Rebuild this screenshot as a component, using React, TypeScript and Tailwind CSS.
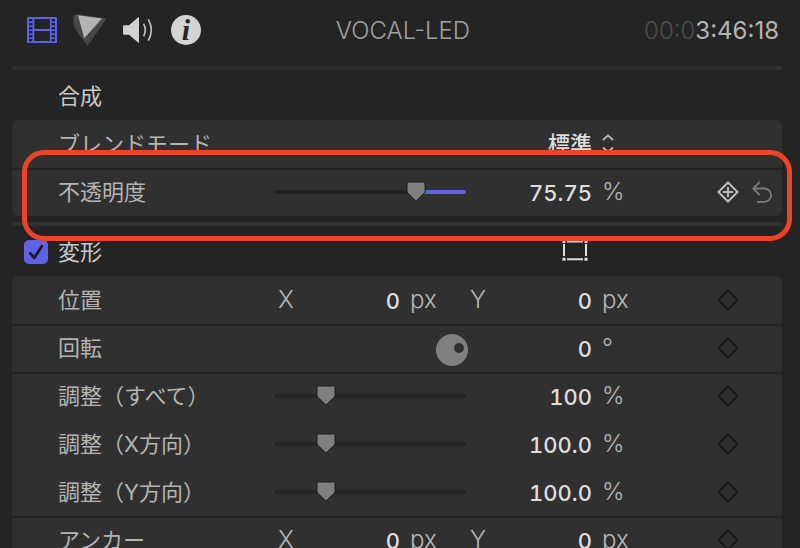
import { useState } from "react";
import type { ReactNode } from "react";

const filmHoles = [2, 6, 10, 14, 18, 22];

function FilmIcon() {
  return (
    <svg width="30" height="26" viewBox="0 0 30 26">
      <rect width="30" height="26" rx="0.5" fill="#5d62e6" />
      <g fill="#242424">
        <rect x="7.3" y="2" width="15.6" height="10" />
        <rect x="7.3" y="14" width="15.6" height="10" />
        {filmHoles.map((y) => (
          <g key={y}>
            <rect x="2" y={y} width="3.4" height="2.4" />
            <rect x="24.6" y={y} width="3.4" height="2.4" />
          </g>
        ))}
      </g>
    </svg>
  );
}

function ColorIcon() {
  return (
    <svg width="34" height="34" viewBox="0 0 34 34">
      <path d="M.3 5Q.5 1.2 4.5 1.2L33.6 5.5 14.7 32.7Q7 24 2 15 .1 10 .3 5Z" fill="#474747" />
      <path d="M5 2.3 29 5.5 11.2 25.3Z" fill="#b4b4b4" />
    </svg>
  );
}

function SpeakerIcon() {
  return (
    <svg width="32" height="30" viewBox="0 0 32 30" fill="none">
      <path d="M1.2 10.3H6L15 2.4Q16 1.8 16 3V27Q16 28.2 15 27.6L6 19.7H1.2Q0 19.7 0 18.5V11.5Q0 10.3 1.2 10.3Z" fill="#d2d2d2" />
      <path d="M20.6 8.6Q24 15 20.6 21.4M25.3 4.4Q31.3 15 25.3 25.6" stroke="#bdbdbd" strokeWidth="1.7" />
    </svg>
  );
}

function InfoIcon() {
  return (
    <svg width="30" height="30" viewBox="0 0 30 30" className="overflow-visible">
      <circle cx="15" cy="15" r="15" fill="#d4d4d4" />
      <text x="15" y="25" textAnchor="middle" className="fill-[#242424] font-['Liberation_Serif',serif] text-[30px] font-bold italic">
        i
      </text>
    </svg>
  );
}

function Slider({ label, initial, filled = false }: { label: string; initial: number; filled?: boolean }) {
  const [position, setPosition] = useState(initial);

  return (
    <div className="relative flex h-6 w-full items-center">
      <div className="flex h-1 w-full justify-end overflow-hidden rounded-full bg-[#242424]">
        {filled && <div className="bg-[#5d62e6]" style={{ width: `${100 - position}%` }} />}
      </div>
      <svg
        width="22"
        height="22"
        viewBox="0 0 22 22"
        className="absolute top-0 -translate-x-1/2"
        style={{ left: `${position}%` }}
      >
        <path
          d="M3.5 2H18.5Q20 2 20 3.5V11.5Q20 12.3 19.4 13L12 20.2Q11 21 10 20.2L2.6 13Q2 12.3 2 11.5V3.5Q2 2 3.5 2Z"
          fill="#808080"
          stroke="#1c1c1c"
        />
      </svg>
      <input
        type="range"
        aria-label={label}
        value={position}
        onChange={(e) => setPosition(Number(e.target.value))}
        className="absolute inset-0 w-full cursor-pointer opacity-0"
      />
    </div>
  );
}

function Field({ label, value, unit, axis }: { label: string; value: string; unit: string; axis?: string }) {
  return (
    <div className="flex items-center">
      <label className="flex w-[126px] items-center pl-1">
        {axis && <span className="text-2xl font-light text-[#b8b8b8]">{axis}</span>}
        <input
          type="text"
          aria-label={label}
          defaultValue={value}
          className="w-full min-w-0 bg-transparent pt-0.5 text-right font-medium text-[#dedede] tabular-nums outline-none"
        />
      </label>
      <span className="pl-[10px] text-2xl font-light text-[#b8b8b8]">{unit}</span>
    </div>
  );
}

function Keyframe({ active = false }: { active?: boolean }) {
  return (
    <button type="button" aria-label="キーフレーム" className={active ? "text-[#bcbcbc]" : "text-[#191919]"}>
      <svg width="22" height="22" viewBox="0 0 22 22" fill="none" stroke="currentColor" strokeWidth="2">
        <path d="M11 1.5 20.5 11 11 20.5 1.5 11Z" />
        {active && <path d="M11 6V16M6 11H16" />}
      </svg>
    </button>
  );
}

function Row({
  label,
  divided = false,
  control,
  actions,
  children,
  overlay,
}: {
  label: string;
  divided?: boolean;
  control?: ReactNode;
  actions?: ReactNode;
  children: ReactNode;
  overlay?: ReactNode;
}) {
  return (
    <div
      className={`relative grid h-12 grid-cols-[216px_192px_1fr_22px_33px] items-center pr-[10px] pl-[46px] ${
        divided ? "shadow-[inset_0_2px_0_#242424]" : ""
      }`}
    >
      <span className="whitespace-nowrap text-[#b4b4b4]">{label}</span>
      <div className="flex items-center">{control}</div>
      <div>{children}</div>
      {actions}
      {overlay}
    </div>
  );
}

function PositionRow({ label, divided }: { label: string; divided?: boolean }) {
  return (
    <Row
      label={label}
      divided={divided}
      control={<Field label={`${label} X`} axis="X" value="0" unit="px" />}
      actions={<Keyframe />}
    >
      <Field label={`${label} Y`} axis="Y" value="0" unit="px" />
    </Row>
  );
}

function Header() {
  return (
    <header className="grid h-[66px] grid-cols-[1fr_auto_1fr] items-center pr-[3px] pb-1.5 pl-[15px] text-2xl">
      <nav className="flex items-center gap-4">
        <button type="button" aria-label="ビデオ"><FilmIcon /></button>
        <button type="button" aria-label="カラー"><ColorIcon /></button>
        <button type="button" aria-label="オーディオ"><SpeakerIcon /></button>
        <button type="button" aria-label="情報"><InfoIcon /></button>
      </nav>
      <h1 className="pt-0.5 font-light text-[#a0a0a0]">VOCAL-LED</h1>
      <p className="pt-0.5 text-right text-[#b4b4b4]">
        <span className="font-light text-[#4c4c4c]">00:0</span>3:46:18
      </p>
    </header>
  );
}

const scales = [
  { label: "調整（すべて）", value: "100", divided: true },
  { label: "調整（X方向）", value: "100.0", divided: false },
  { label: "調整（Y方向）", value: "100.0", divided: false },
];

export default function App() {
  return (
    <main className="h-screen overflow-hidden bg-[#242424] pr-[18px] pl-3 font-['Inter','Noto_Sans_CJK_JP',sans-serif] text-[22px] leading-8">
      <Header />

      <section className="border-t-4 border-[#303030]">
        <h2 className="flex h-[50px] items-center pt-0.5 pl-[46px] text-[#c8c8c8]">合成</h2>
        <div className="rounded-md bg-[#303030]">
          <Row label="ブレンドモード">
            <label className="flex items-center gap-[10px] pl-[82px]">
              <select aria-label="ブレンドモード" className="w-11 appearance-none bg-transparent font-medium text-[#dedede] outline-none">
                <option>標準</option>
              </select>
              <svg width="12" height="20" viewBox="0 0 12 20" fill="none" stroke="#b4b4b4" strokeWidth="2">
                <path d="M1 6 6 1.5 11 6M1 13.5 6 18 11 13.5" />
              </svg>
            </label>
          </Row>
          <Row
            label="不透明度"
            divided
            control={<Slider label="不透明度" initial={74} filled />}
            actions={
              <>
                <Keyframe active />
                <button type="button" aria-label="リセット" className="justify-self-end">
                  <svg width="20" height="22" viewBox="0 0 20 22" fill="none" stroke="#7c7c7c" strokeWidth="1.8">
                    <path d="M7.7.8 1.2 7.5 7.7 14.2M1.2 7.5H12.4A6.6 6.6 0 0 1 12.4 20.8H5" />
                  </svg>
                </button>
              </>
            }
            overlay={
              <div className="pointer-events-none absolute -top-[18px] -right-[10px] -bottom-[25px] left-[10px] z-10 rounded-[22px] border-5 border-[#ed4428]" />
            }
          >
            <Field label="不透明度" value="75.75" unit="%" />
          </Row>
        </div>
      </section>

      <section className="mt-1.5 border-t-4 border-[#303030]">
        <div className="grid h-[50px] grid-cols-[442px_1fr] items-center pt-0.5 pl-3">
          <label className="flex items-center gap-[10px] text-[#c8c8c8]">
            <span className="grid size-6 place-items-center">
              <input
                type="checkbox"
                defaultChecked
                className="peer col-start-1 row-start-1 size-6 appearance-none rounded-[5px] bg-[#484848] checked:bg-[#5d62e6]"
              />
              <svg
                width="24"
                height="24"
                viewBox="0 0 24 24"
                className="pointer-events-none invisible col-start-1 row-start-1 peer-checked:visible"
              >
                <path d="M6.3 13.3 10.3 18 17.8 6.3" fill="none" stroke="#1c1c20" strokeWidth="2.8" strokeLinecap="round" strokeLinejoin="round" />
              </svg>
            </span>
            <h2>変形</h2>
          </label>
          <button type="button" aria-label="変形コントロール" className="ml-[96px] w-[26px]">
            <svg width="26" height="24" viewBox="0 0 26 24" fill="none" stroke="#dedede" strokeWidth="2">
              <path d="M5 1.5H21M5 19.2H21M2 4V16M24 4V16" />
              <path d="M.5 1.5H3.5M22.5 1.5H25.5M.5 19.2H3.5M22.5 19.2H25.5" strokeWidth="3" />
            </svg>
          </button>
        </div>
        <div className="rounded-md bg-[#303030]">
          <PositionRow label="位置" />
          <Row
            label="回転"
            divided
            control={
              <button type="button" aria-label="回転" className="ml-[162px] shrink-0">
                <svg width="32" height="36" viewBox="0 0 32 36">
                  <circle cx="16" cy="20" r="16" fill="#808080" />
                  <circle cx="23" cy="18" r="5" fill="#303030" />
                </svg>
              </button>
            }
            actions={<Keyframe />}
          >
            <Field label="回転" value="0" unit="°" />
          </Row>
          {scales.map((scale) => (
            <Row
              key={scale.label}
              label={scale.label}
              divided={scale.divided}
              control={<Slider label={scale.label} initial={27} />}
              actions={<Keyframe />}
            >
              <Field label={scale.label} value={scale.value} unit="%" />
            </Row>
          ))}
          <PositionRow label="アンカー" divided />
        </div>
      </section>
    </main>
  );
}
